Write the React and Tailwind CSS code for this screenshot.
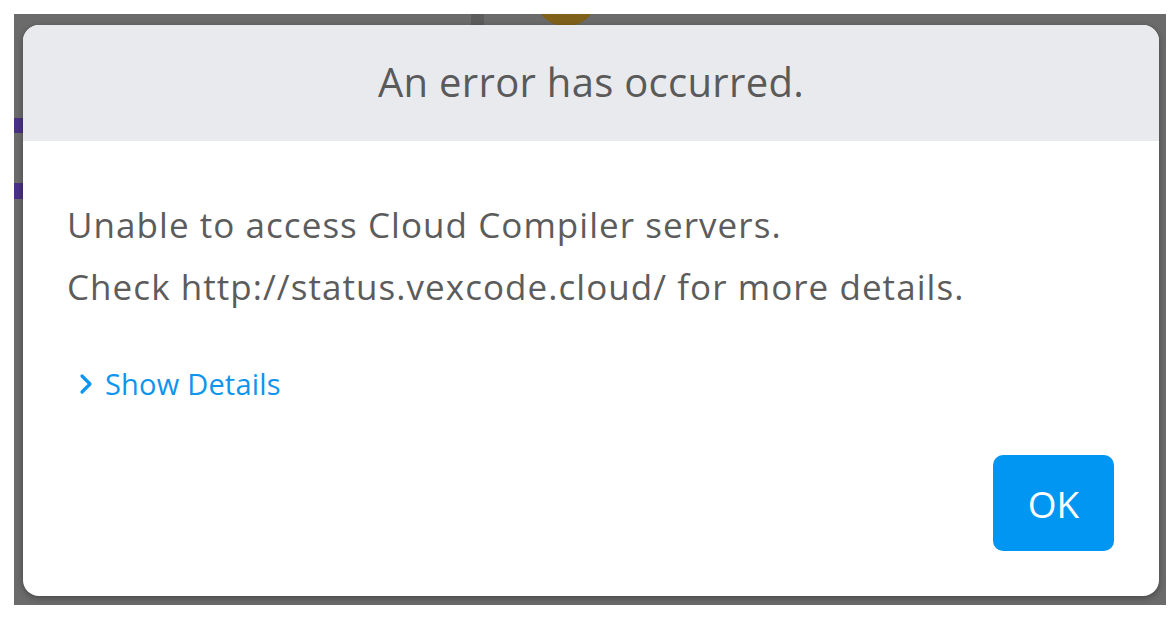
import React from "react";

export default function App() {
  return (
    <div className="w-[1174px] h-[618px] bg-white overflow-hidden" style={{ fontFamily: '"Open Sans", "Noto Sans", sans-serif' }}>
      <div className="relative overflow-hidden ml-[14px] mt-[14px] w-[1152px] h-[591px] bg-[#6b6b6b] pl-[9px] pt-[11px]">
        {/* background app bits showing through the backdrop */}
        <div className="absolute left-0 top-[104px] w-[9px] h-[15px] bg-[#4a3184]" />
        <div className="absolute left-0 top-[169px] w-[9px] h-[16px] bg-[#4a3184]" />
        <div className="absolute left-[457px] top-0 w-[13px] h-[11px] bg-[#5c5c5c]" />
        <div className="absolute left-[522px] top-[-44px] w-[60px] h-[56px] rounded-full bg-[#80611a]" />
        <div className="relative flex flex-col w-[1136px] h-[571px] bg-white rounded-[16px] overflow-hidden shadow-[0_2px_6px_rgba(0,0,0,0.35)]">
          <div className="h-[116px] bg-[#e9eaee] flex items-center justify-center">
            <h1 className="text-[40px] leading-none tracking-[0.3px] text-[#5a5a5a] -mt-[2px]">An error has occurred.</h1>
          </div>
          <div className="flex-1 flex flex-col pl-[44px] pr-[45px] pt-[53px] pb-[45px]">
            <p className="text-[35px] leading-[62px] tracking-[1.05px] text-[#5c5c5c]">Unable to access Cloud Compiler servers.</p>
            <p className="text-[35px] leading-[62px] tracking-[1.05px] text-[#5c5c5c]">Check http://status.vexcode.cloud/ for more details.</p>
            <div className="mt-[46px] flex items-center gap-[12px] text-[#0e95ee] h-[40px]">
              <svg width="14" height="22" viewBox="0 0 14 22" className="ml-[12px]">
                <path d="M3 3 L11 11 L3 19" fill="none" stroke="#0e95ee" strokeWidth="3.2" strokeLinecap="round" strokeLinejoin="round" />
              </svg>
              <span className="text-[29px] leading-[40px] tracking-[0.2px]">Show Details</span>
            </div>
            <div className="flex-1" />
            <div className="flex justify-end">
              <button className="w-[121px] h-[96px] rounded-[10px] bg-[#0096f2] text-white text-[37px] leading-none">OK</button>
            </div>
          </div>
        </div>
      </div>
    </div>
  );
}
